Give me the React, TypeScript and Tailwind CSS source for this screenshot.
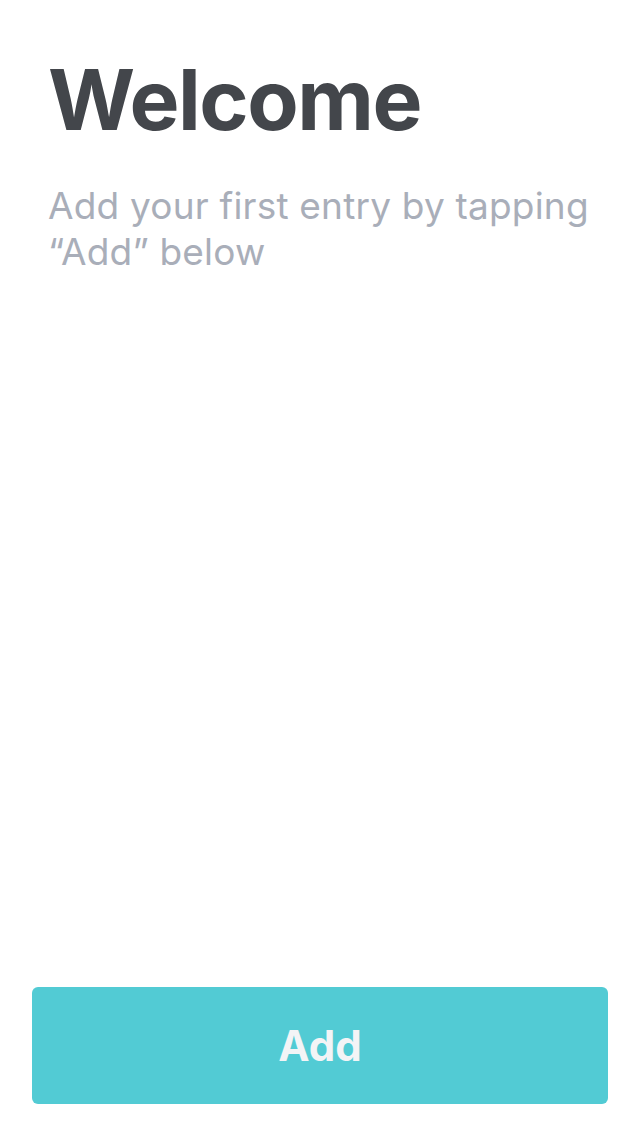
import React from "react";

export default function App() {
  return (
    <div
      className="flex h-[1136px] w-full flex-col bg-white"
      style={{ fontFamily: "Inter, 'Noto Sans', sans-serif" }}
    >
      <div className="flex-1 px-12 pt-[58px]">
        <h1 className="text-[84px] font-bold leading-[84px] tracking-[-1.5px] text-[#43464b]">
          Welcome
        </h1>
        <p className="mt-[41px] text-[37px] leading-[46px] tracking-[0.2px] text-[#a9aeb9]">
          Add your first entry by tapping “Add” below
        </p>
      </div>
      <div className="px-8 pb-8">
        <button className="flex h-[117px] w-full items-center justify-center rounded-[6px] bg-[#52cbd4] text-[42px] font-bold text-[#f3f4f6]">
          Add
        </button>
      </div>
    </div>
  );
}
